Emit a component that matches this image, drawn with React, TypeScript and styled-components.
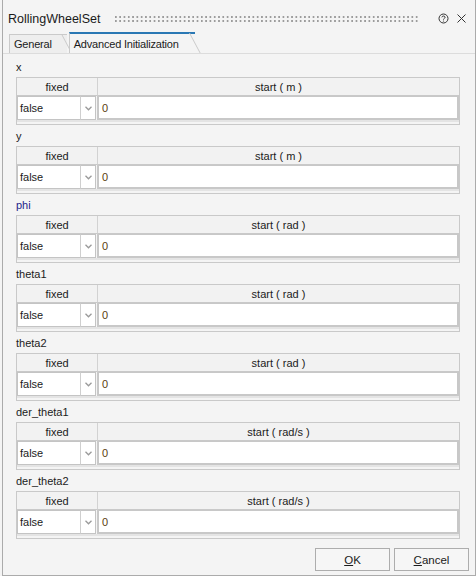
import React from "react";
import styled, { createGlobalStyle } from "styled-components";

const Global = createGlobalStyle`
  html, body {
    margin: 0;
    padding: 0;
    background: #f4f4f4;
  }
  body {
    font-family: "Liberation Sans", Arial, sans-serif;
    font-size: 11px;
    color: #1b1b1b;
  }
`;

const Window = styled.div`
  width: 474px;
  height: 576px;
  margin-left: 2px;
  box-sizing: border-box;
  border: 1px solid #ababab;
  border-top: none;
  background: #f4f4f4;
  display: flex;
  flex-direction: column;
`;

const TitleBar = styled.div`
  height: 31px;
  display: flex;
  align-items: center;
  padding: 6px 8px 0 5px;
  box-sizing: border-box;
`;

const Title = styled.div`
  font-size: 12.5px;
  color: #1a1a1a;
`;

const Grip = styled.div`
  flex: 1;
  height: 8px;
  margin: 0 12px 0 15px;
  background-image: radial-gradient(circle at 1px 1px, #9c9c9c 1px, transparent 1.1px);
  background-size: 4.3px 4px;
  background-position: 0 1px;
`;

const TitleIcon = styled.svg`
  width: 11px;
  height: 11px;
  margin-left: 7px;
`;

const TabBar = styled.div`
  height: 22px;
  display: flex;
  align-items: flex-end;
  padding-left: 6px;
  border-bottom: 1px solid #dcdcdc;
`;

const Tab = styled.div<{ $active?: boolean }>`
  position: relative;
  height: ${(p) => (p.$active ? "21px" : "19px")};
  display: flex;
  align-items: center;
  padding: 0 ${(p) => (p.$active ? "16px" : "15px")} 0 4px;
  margin-right: 2px;
  border-left: 1px solid #cacaca;
  border-top: ${(p) => (p.$active ? "2px solid #2a78b4" : "1px solid #cacaca")};
  background: ${(p) => (p.$active ? "#f4f4f4" : "#eeeeee")};
  color: #1b1b1b;
  font-size: 11px;
  letter-spacing: -0.2px;
  box-sizing: border-box;
  &::after {
    content: "";
    position: absolute;
    top: -1px;
    right: 5px;
    width: 1px;
    height: calc(100% + 1px);
    background: #cacaca;
    transform: skewX(28deg);
    transform-origin: top;
  }
`;

const Content = styled.div`
  flex: 1;
  display: flex;
  flex-direction: column;
  padding: 6px 15px 0 13px;
`;

const Section = styled.div`
  height: 69px;
  display: flex;
  flex-direction: column;
`;

const Label = styled.div<{ $accent?: boolean }>`
  height: 17px;
  line-height: 15px;
  color: ${(p) => (p.$accent ? "#25258a" : "#1b1b1b")};
`;

const Table = styled.div`
  border: 1px solid #c9c9c9;
  height: 48px;
  box-sizing: border-box;
  display: grid;
  grid-template-columns: 81px 1fr;
  grid-template-rows: 18px 24px 1fr;
`;

const HeadCell = styled.div<{ $last?: boolean }>`
  display: flex;
  align-items: center;
  justify-content: center;
  border-right: ${(p) => (p.$last ? "none" : "1px solid #d2d2d2")};
  border-bottom: 1px solid #c9c9c9;
  background: #f2f2f2;
  color: #1b1b1b;
`;

const SelectCell = styled.div`
  display: flex;
  border-right: 1px solid #c9c9c9;
  padding-right: 1px;
`;

const SelectValue = styled.div`
  flex: 1;
  display: flex;
  align-items: center;
  padding-left: 2px;
  background: #ffffff;
  border: 1px solid #c4c4c4;
  border-right: 1px solid #cfcfcf;
`;

const DropButton = styled.div`
  width: 14px;
  display: flex;
  align-items: center;
  justify-content: center;
  background: #ffffff;
  border: 1px solid #c4c4c4;
  border-left: none;
`;

const ValueInput = styled.div`
  display: flex;
  align-items: center;
  padding-left: 3px;
  background: #ffffff;
  border: 2px solid #c8c8c8;
  border-width: 1px 2px 2px 1px;
  color: #5b3d10;
`;

const Spacer = styled.div`
  grid-column: 1 / span 2;
  border-top: 2px solid #e4e4e4;
`;

const Footer = styled.div`
  display: flex;
  justify-content: flex-end;
  gap: 4px;
  padding: 0 6px 4px 0;
`;

const Button = styled.button`
  width: 75px;
  height: 23px;
  box-sizing: border-box;
  border: 1px solid #adadad;
  background: #f6f6f6;
  font-family: "Liberation Sans", Arial, sans-serif;
  font-size: 11.5px;
  color: #1b1b1b;
  padding: 0;
  u {
    text-decoration: underline;
  }
`;

const sections = [
  { name: "x", unit: "m" },
  { name: "y", unit: "m" },
  { name: "phi", unit: "rad", accent: true },
  { name: "theta1", unit: "rad" },
  { name: "theta2", unit: "rad" },
  { name: "der_theta1", unit: "rad/s" },
  { name: "der_theta2", unit: "rad/s" },
];

function Chevron() {
  return (
    <svg width="7" height="5" viewBox="0 0 7 5">
      <path d="M0.5 0.8 L3.5 3.8 L6.5 0.8" fill="none" stroke="#9a9a9a" strokeWidth="1.3" />
    </svg>
  );
}

function App() {
  return (
    <Window>
      <Global />
      <TitleBar>
        <Title>RollingWheelSet</Title>
        <Grip />
        <TitleIcon viewBox="0 0 11 11">
          <circle cx="5.5" cy="5.5" r="4.5" fill="none" stroke="#333" strokeWidth="1" />
          <path d="M3.9 4.3 C3.9 2.6 7.1 2.6 7.1 4.3 C7.1 5.4 5.5 5.3 5.5 6.6" fill="none" stroke="#333" strokeWidth="1" />
          <circle cx="5.5" cy="8" r="0.6" fill="#333" />
        </TitleIcon>
        <TitleIcon viewBox="0 0 11 11">
          <path d="M1.5 1.5 L9.5 9.5 M9.5 1.5 L1.5 9.5" stroke="#333" strokeWidth="1" />
        </TitleIcon>
      </TitleBar>
      <TabBar>
        <Tab>General</Tab>
        <Tab $active>Advanced Initialization</Tab>
      </TabBar>
      <Content>
        {sections.map((s) => (
          <Section key={s.name}>
            <Label $accent={s.accent}>{s.name}</Label>
            <Table>
              <HeadCell>fixed</HeadCell>
              <HeadCell $last>start ( {s.unit} )</HeadCell>
              <SelectCell>
                <SelectValue>false</SelectValue>
                <DropButton>
                  <Chevron />
                </DropButton>
              </SelectCell>
              <ValueInput>0</ValueInput>
              <Spacer />
            </Table>
          </Section>
        ))}
      </Content>
      <Footer>
        <Button>
          <u>O</u>K
        </Button>
        <Button>
          <u>C</u>ancel
        </Button>
      </Footer>
    </Window>
  );
}

export default App;
